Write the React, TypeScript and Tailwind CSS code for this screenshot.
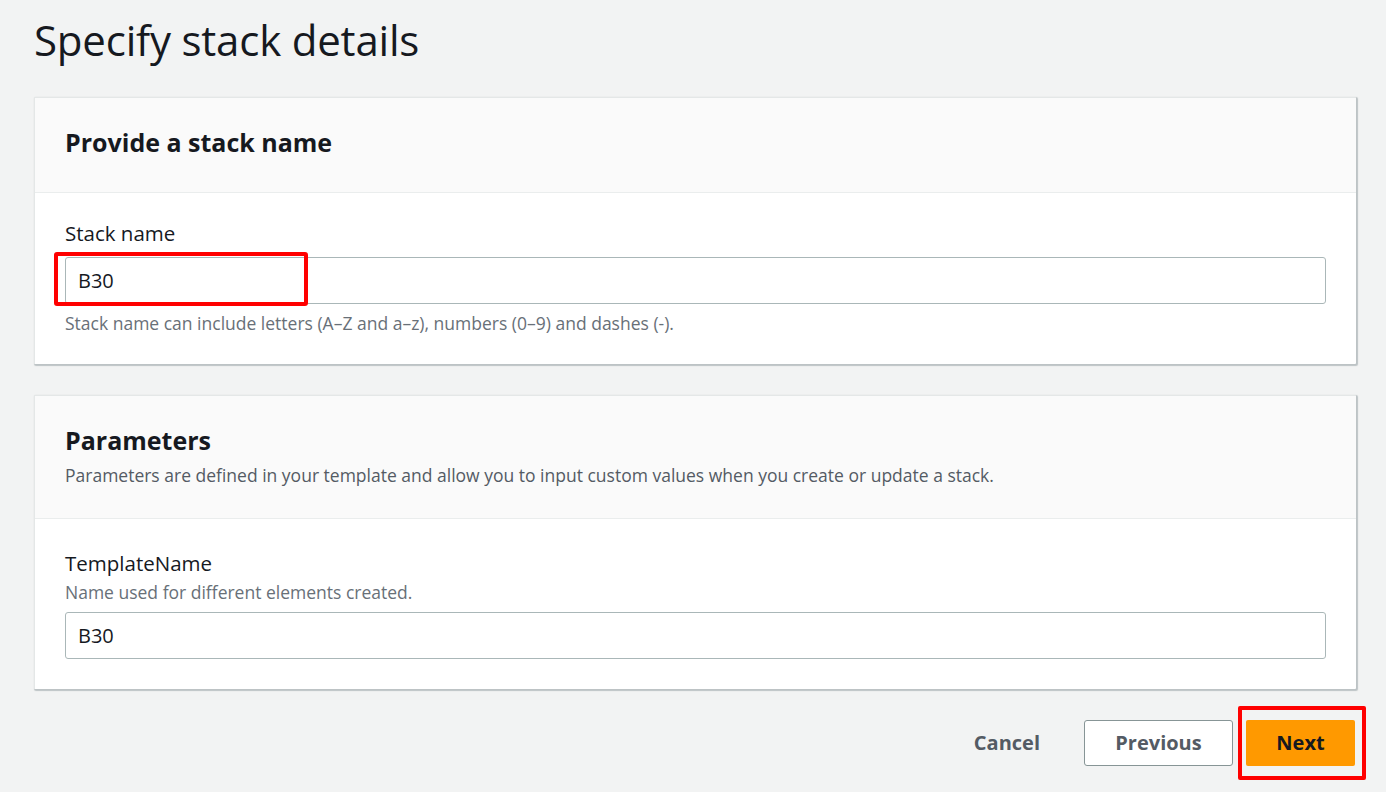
import React from "react";

const font = { fontFamily: '"Open Sans", "Noto Sans", Arial, sans-serif' };

function Card({
  header,
  children,
}: {
  header: React.ReactNode;
  children: React.ReactNode;
}) {
  return (
    <section className="overflow-hidden rounded-[1px] border-l border-t border-[#e4e7e7] bg-white shadow-[1px_1px_1px_1px_rgba(0,28,36,0.22)]">
      {header}
      {children}
    </section>
  );
}

export default function App() {
  return (
    <div
      style={font}
      className="min-h-[792px] w-[1386px] bg-[#f2f3f3] pl-[34px] pr-[30px] pt-[14px] text-[#16191f]"
    >
      <h1 className="text-[42px] leading-[52px] font-normal tracking-[-0.2px] text-[#16191f]">
        Specify stack details
      </h1>

      <div className="mt-[31px]">
        <Card
          header={
            <div className="flex h-[95px] items-center border-b border-[#eaeded] bg-[#fafafa] px-[30px] pb-[6px]">
              <h2 className="text-[25px] font-bold leading-[30px]">Provide a stack name</h2>
            </div>
          }
        >
          <div className="px-[30px] pb-[31px] pt-[28px]">
            <div className="text-[20.5px] leading-[24px]">Stack name</div>
            <div className="relative mt-[12px]">
              <div className="flex h-[47px] items-center rounded-[3px] border border-[#aab7b8] bg-white px-[12px] text-[20px]">
                B30
              </div>
              <div className="absolute left-[-11px] top-[-5px] h-[54px] w-[254px] rounded-[3px] border-[4px] border-[#ff0000]" />
            </div>
            <p className="mt-[9px] text-[17.5px] leading-[20px] text-[#687078]">
              Stack name can include letters (A–Z and a–z), numbers (0–9) and dashes (-).
            </p>
          </div>
        </Card>
      </div>

      <div className="mt-[31px]">
        <Card
          header={
            <div className="border-b border-[#eaeded] bg-[#fafafa] px-[30px] pb-[33px] pt-[29px]">
              <h2 className="text-[25px] font-bold leading-[30px]">Parameters</h2>
              <p className="mt-[10px] text-[17.5px] leading-[20px] text-[#545b64]">
                Parameters are defined in your template and allow you to input custom values when
                you create or update a stack.
              </p>
            </div>
          }
        >
          <div className="px-[30px] pb-[30px] pt-[32px]">
            <div className="text-[20.5px] leading-[24px]">TemplateName</div>
            <div className="mt-[7px] text-[17.5px] leading-[20px] text-[#687078]">
              Name used for different elements created.
            </div>
            <div className="mt-[10px] flex h-[47px] items-center rounded-[3px] border border-[#aab7b8] bg-white px-[12px] text-[20px]">
              B30
            </div>
          </div>
        </Card>
      </div>

      <div className="mt-[31px] flex items-center justify-end gap-[13px] pr-[1px]">
        <button className="mr-[21px] h-[46px] px-[10px] text-[20px] font-bold text-[#545b64]">
          Cancel
        </button>
        <button className="h-[46px] w-[149px] rounded-[3px] border border-[#879596] bg-white text-[20px] font-bold text-[#545b64]">
          Previous
        </button>
        <div className="relative">
          <button className="h-[46px] w-[109px] rounded-[2px] bg-[#ff9900] text-[20px] font-bold text-[#16191f]">
            Next
          </button>
          <div className="absolute left-[-8px] top-[-14px] h-[74px] w-[128px] rounded-[2px] border-[4px] border-[#ff0000]" />
        </div>
      </div>
    </div>
  );
}
